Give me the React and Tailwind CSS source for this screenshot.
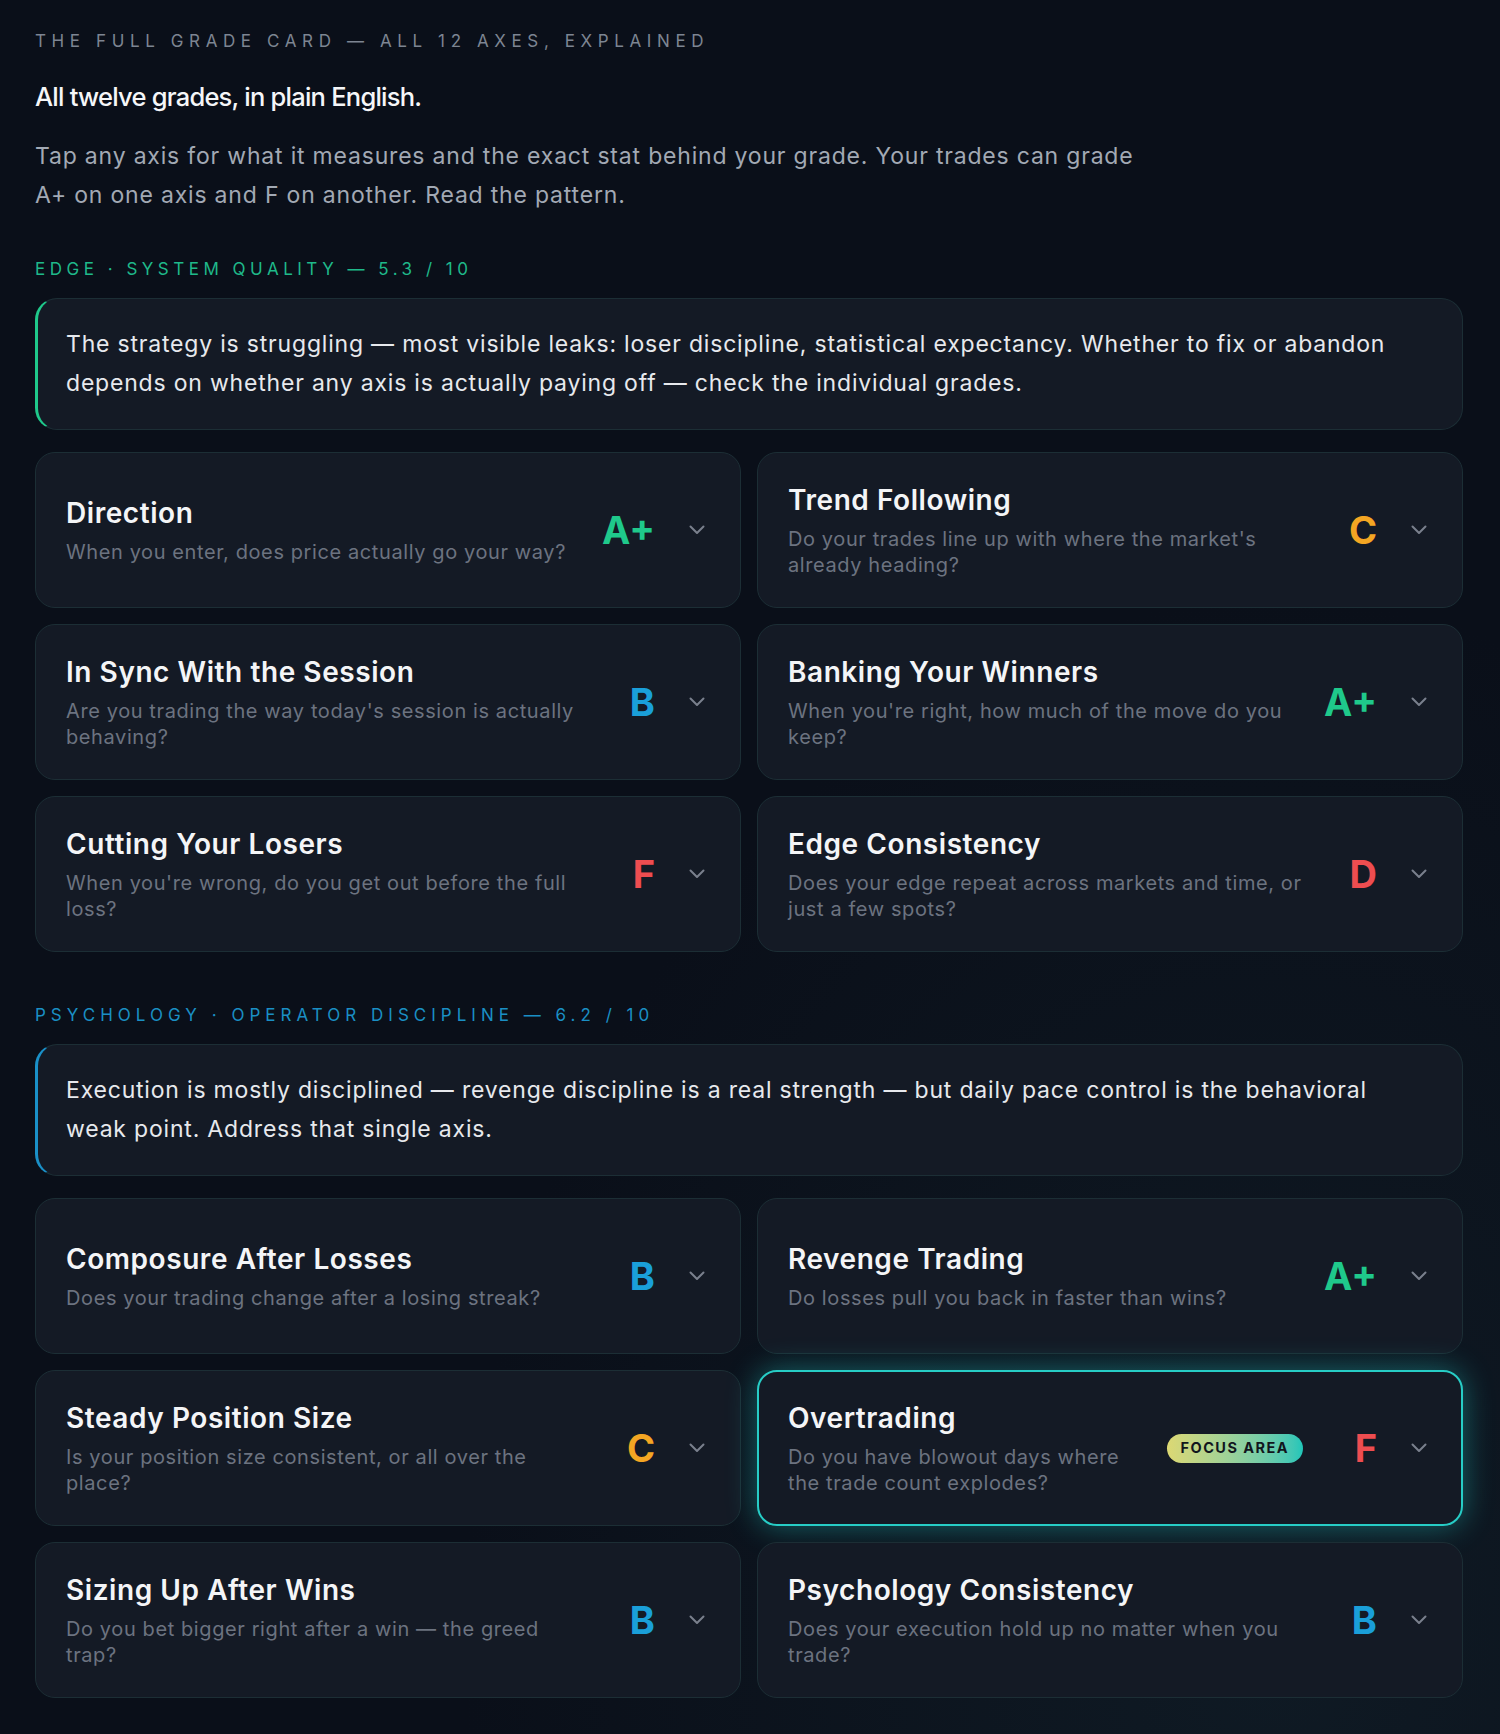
import React from 'react';

const BODY = { fontFamily: 'Inter, "Noto Sans", "Liberation Sans", sans-serif' };

const gradeColor = {
  'A+': 'text-[#1fc98b]',
  B: 'text-[#1a9fd9]',
  C: 'text-[#f4a623]',
  D: 'text-[#ee4d50]',
  F: 'text-[#ee4d50]',
};

const edgeAxes = [
  { title: 'Direction', lines: ['When you enter, does price actually go your way?'], grade: 'A+' },
  { title: 'Trend Following', lines: ["Do your trades line up with where the market's", 'already heading?'], grade: 'C' },
  { title: 'In Sync With the Session', lines: ["Are you trading the way today's session is actually", 'behaving?'], grade: 'B' },
  { title: 'Banking Your Winners', lines: ["When you're right, how much of the move do you", 'keep?'], grade: 'A+' },
  { title: 'Cutting Your Losers', lines: ["When you're wrong, do you get out before the full", 'loss?'], grade: 'F' },
  { title: 'Edge Consistency', lines: ['Does your edge repeat across markets and time, or', 'just a few spots?'], grade: 'D' },
];

const psychAxes = [
  { title: 'Composure After Losses', lines: ['Does your trading change after a losing streak?'], grade: 'B' },
  { title: 'Revenge Trading', lines: ['Do losses pull you back in faster than wins?'], grade: 'A+' },
  { title: 'Steady Position Size', lines: ['Is your position size consistent, or all over the', 'place?'], grade: 'C' },
  { title: 'Overtrading', lines: ['Do you have blowout days where', 'the trade count explodes?'], grade: 'F', focus: true },
  { title: 'Sizing Up After Wins', lines: ['Do you bet bigger right after a win — the greed', 'trap?'], grade: 'B' },
  { title: 'Psychology Consistency', lines: ['Does your execution hold up no matter when you', 'trade?'], grade: 'B' },
];

const Chevron = () => (
  <svg width="16" height="10" viewBox="0 0 16 10" fill="none" className="shrink-0">
    <polyline points="1.5,1.5 8,8 14.5,1.5" stroke="#7a808d" strokeWidth="2" strokeLinecap="round" strokeLinejoin="round" />
  </svg>
);

const AxisCard = ({ axis }) => {
  const border = axis.focus
    ? 'border-2 border-[#27cdc6] shadow-[0_0_30px_rgba(34,197,192,0.45)]'
    : 'border border-[#1c2e35]';

  return (
    <div className={`h-[156px] rounded-[20px] bg-[#141a25] ${border} flex items-center ${axis.focus ? 'pl-[29px] pr-[34px]' : 'pl-[30px] pr-[35px]'}`}>
      <div className="flex-1 min-w-0">
        <div className="text-[28px] leading-[34px] font-semibold text-[#f4f5f7] tracking-[0.02em]">{axis.title}</div>
        <div className="mt-[9px] text-[20px] leading-[26px] tracking-[0.03em] text-[#6c7380] whitespace-nowrap">
          {axis.lines.map((l) => (
            <div key={l}>{l}</div>
          ))}
        </div>
      </div>
      {axis.focus && (
        <span className="mr-[14px] h-[29px] px-[14px] rounded-full bg-gradient-to-r from-[#dcd873] to-[#1ec6b9] text-[#11161d] text-[14.5px] font-bold tracking-[0.1em] flex items-center">
          FOCUS AREA
        </span>
      )}
      <div className={`w-[60px] text-right text-[38px] leading-none font-bold ${gradeColor[axis.grade]}`}>{axis.grade}</div>
      <div className="ml-[34px]">
        <Chevron />
      </div>
    </div>
  );
};

const SectionLabel = ({ children, className = '' }) => (
  <div className={`text-[17px] leading-[24px] uppercase ${className}`}>{children}</div>
);

const Summary = ({ accent, children, className = '' }) => (
  <div className={`rounded-[22px] bg-[#141a25] border border-[#1c2e35] border-l-[3px] ${accent} pl-[28px] pr-[30px] py-[26px] text-[23px] leading-[39px] tracking-[0.035em] text-[#e7e9ed] whitespace-nowrap ${className}`}>
    {children}
  </div>
);

export default function App() {
  return (
    <div
      style={BODY}
      className="min-h-[1734px] bg-[radial-gradient(ellipse_at_85%_95%,#0f1a24_0%,#0a0f19_45%,#0a0f19_100%)] pl-[35px] pr-[37px] pt-[29px] pb-[34px]"
    >
      <SectionLabel className="text-[#7d8592] tracking-[0.33em]">The full grade card — all 12 axes, explained</SectionLabel>

      <h1 className="mt-[27px] text-[25.5px] leading-[34px] font-medium tracking-[-0.03em] text-[#f5f6f8]">
        All twelve grades, in plain English.
      </h1>

      <p className="mt-[23px] text-[23px] leading-[39px] tracking-[0.035em] text-[#a2a9b4] whitespace-nowrap">
        Tap any axis for what it measures and the exact stat behind your grade. Your trades can grade
        <br />
        A+ on one axis and F on another. Read the pattern.
      </p>

      <SectionLabel className="mt-[42px] text-[#1fb98a] tracking-[0.265em]">Edge · System quality — 5.3 / 10</SectionLabel>

      <Summary accent="border-l-[#1fc98b]" className="mt-[17px]">
        The strategy is struggling — most visible leaks: loser discipline, statistical expectancy. Whether to fix or abandon
        <br />
        depends on whether any axis is actually paying off — check the individual grades.
      </Summary>

      <div className="mt-[22px] grid grid-cols-2 gap-x-[16px] gap-y-[16px]">
        {edgeAxes.map((a) => (
          <AxisCard key={a.title} axis={a} />
        ))}
      </div>

      <SectionLabel className="mt-[51px] text-[#1a8fc4] tracking-[0.295em]">Psychology · Operator discipline — 6.2 / 10</SectionLabel>

      <Summary accent="border-l-[#1a90c8]" className="mt-[17px]">
        Execution is mostly disciplined — revenge discipline is a real strength — but daily pace control is the behavioral
        <br />
        weak point. Address that single axis.
      </Summary>

      <div className="mt-[22px] grid grid-cols-2 gap-x-[16px] gap-y-[16px]">
        {psychAxes.map((a) => (
          <AxisCard key={a.title} axis={a} />
        ))}
      </div>
    </div>
  );
}
